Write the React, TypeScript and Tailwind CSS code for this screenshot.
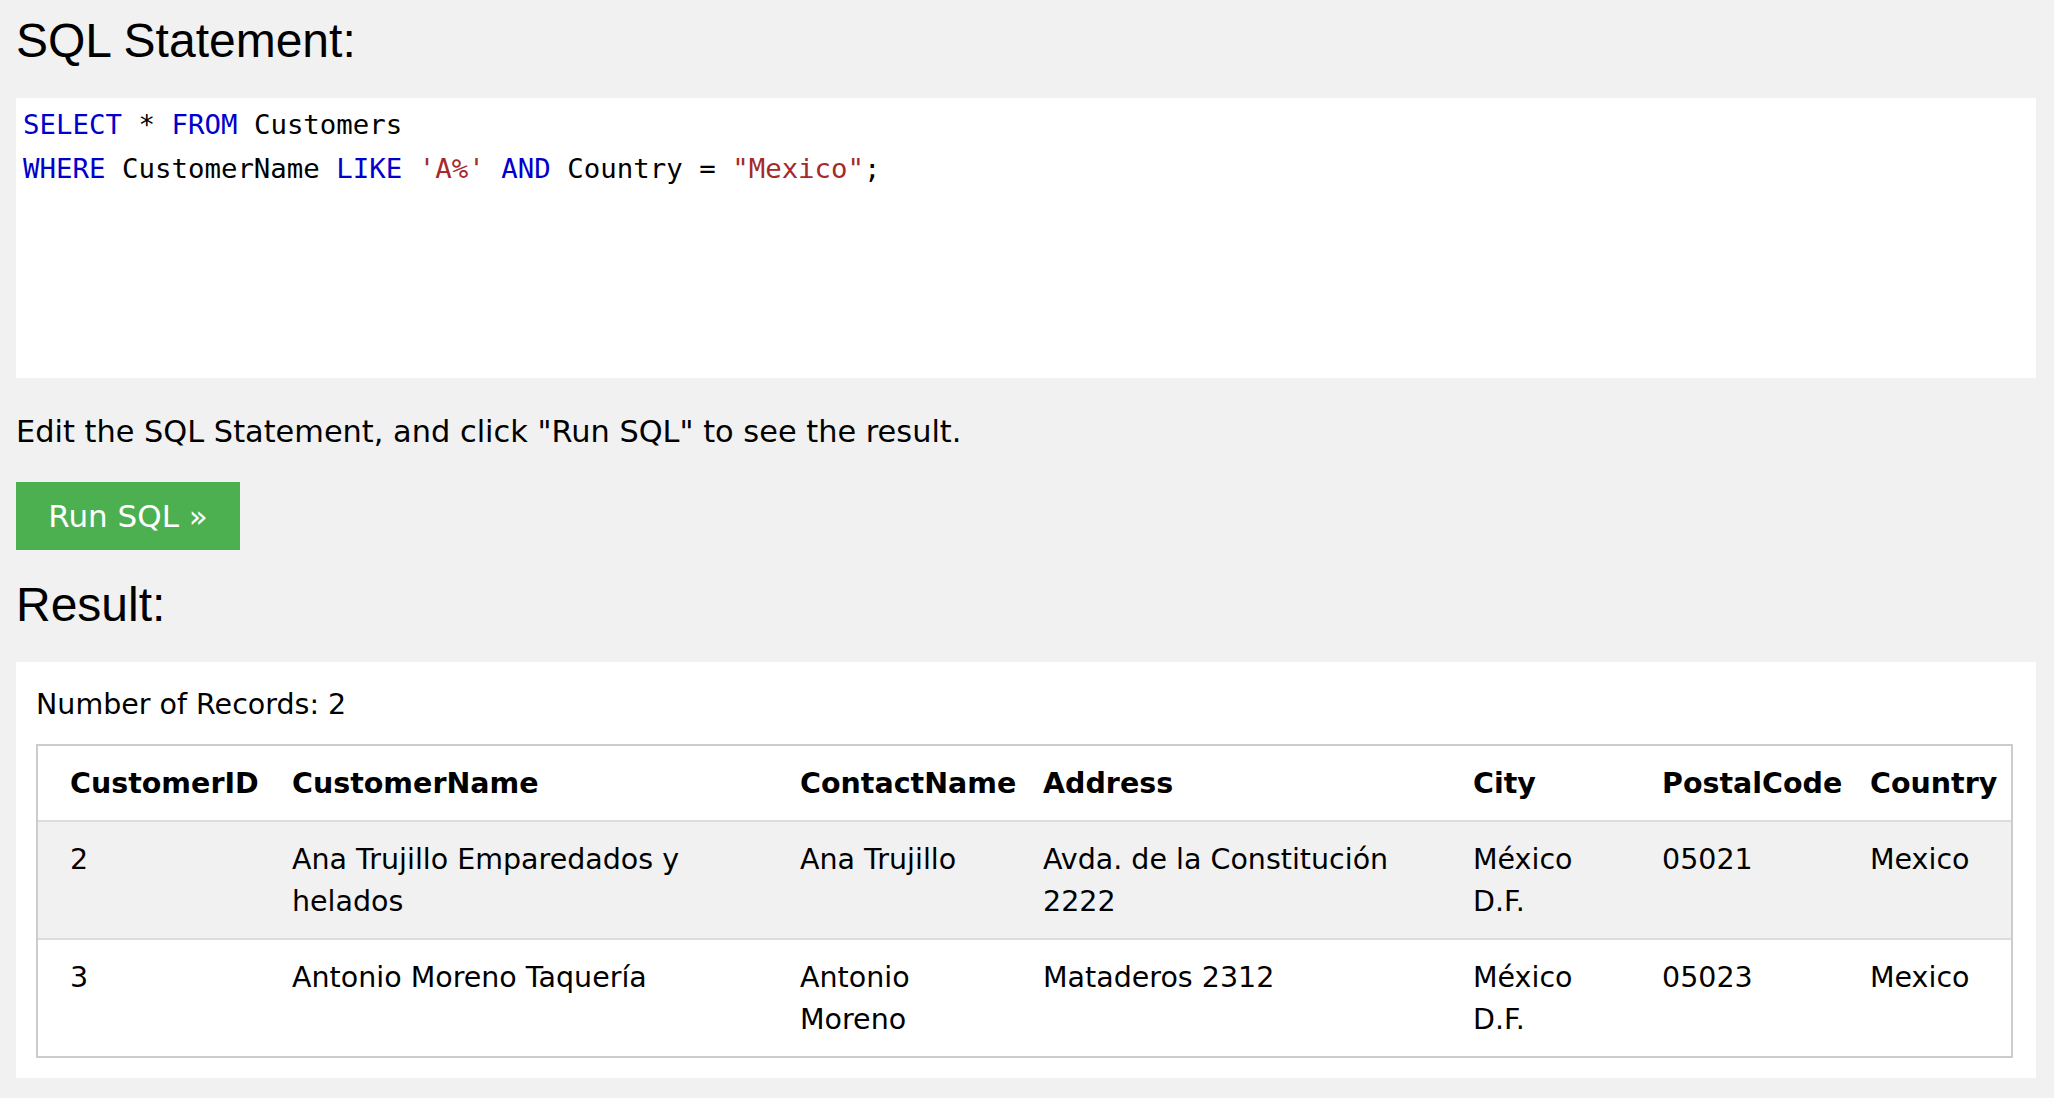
const columns = [
  "CustomerID",
  "CustomerName",
  "ContactName",
  "Address",
  "City",
  "PostalCode",
  "Country",
];

const rows = [
  ["2", "Ana Trujillo Emparedados y helados", "Ana Trujillo", "Avda. de la Constitución 2222", "México D.F.", "05021", "Mexico"],
  ["3", "Antonio Moreno Taquería", "Antonio Moreno", "Mataderos 2312", "México D.F.", "05023", "Mexico"],
];

const gridCols = "grid grid-cols-[238px_508px_243px_430px_189px_208px_157px]";

const Kw = ({ children }: { children: React.ReactNode }) => (
  <span className="text-[#0000cd]">{children}</span>
);
const Str = ({ children }: { children: React.ReactNode }) => (
  <span className="text-[#a52a2a]">{children}</span>
);

const App = () => {
  return (
    <div className="min-h-screen bg-[#f1f1f1] pl-[16px] pr-[18px] pt-[14px] pb-[20px] text-black">
      <h2 className="font-['Liberation_Sans',Arial,sans-serif] text-[48px] leading-[54px]">
        SQL Statement:
      </h2>

      <div className="mt-[30px] h-[280px] bg-white pl-[7px] pt-[5px] font-['DejaVu_Sans_Mono',monospace] text-[27.4px] leading-[43.7px] whitespace-pre">
        <div>
          <Kw>SELECT</Kw> * <Kw>FROM</Kw> Customers
        </div>
        <div>
          <Kw>WHERE</Kw> CustomerName <Kw>LIKE</Kw> <Str>'A%'</Str> <Kw>AND</Kw> Country = <Str>"Mexico"</Str>;
        </div>
      </div>

      <p className="mt-[31px] font-['DejaVu_Sans',Verdana,sans-serif] text-[30.4px] leading-[45px]">
        Edit the SQL Statement, and click "Run SQL" to see the result.
      </p>

      <button className="mt-[28px] flex h-[68px] w-[224px] items-center justify-center bg-[#4caf50] font-['DejaVu_Sans',Verdana,sans-serif] text-[31px] text-white">
        Run SQL »
      </button>

      <h2 className="mt-[28px] font-['Liberation_Sans',Arial,sans-serif] text-[48px] leading-[54px]">
        Result:
      </h2>

      <div className="mt-[30px] bg-white pl-[20px] pr-[23px] pt-[22px] pb-[20px] font-['DejaVu_Sans',Verdana,sans-serif] text-[28.5px] leading-[42px]">
        <div>Number of Records: 2</div>

        <div className="mt-[18px] border-2 border-[#ccc]">
          <div className={`${gridCols} font-bold`}>
            {columns.map((c, i) => (
              <div
                key={c}
                className={`${i === 0 ? "pl-[32px]" : "pl-[16px]"} pr-[16px] pt-[17px] pb-[15px] whitespace-nowrap`}
              >
                {c}
              </div>
            ))}
          </div>
          {rows.map((r, ri) => (
            <div
              key={ri}
              className={`${gridCols} border-t-2 border-[#ddd] ${ri === 0 ? "bg-[#f1f1f1]" : "bg-white"}`}
            >
              {r.map((cell, i) => (
                <div
                  key={i}
                  className={`${i === 0 ? "pl-[32px]" : "pl-[16px]"} pr-[16px] pt-[17px] pb-[15px]`}
                >
                  {cell}
                </div>
              ))}
            </div>
          ))}
        </div>
      </div>
    </div>
  );
};

export default App;
